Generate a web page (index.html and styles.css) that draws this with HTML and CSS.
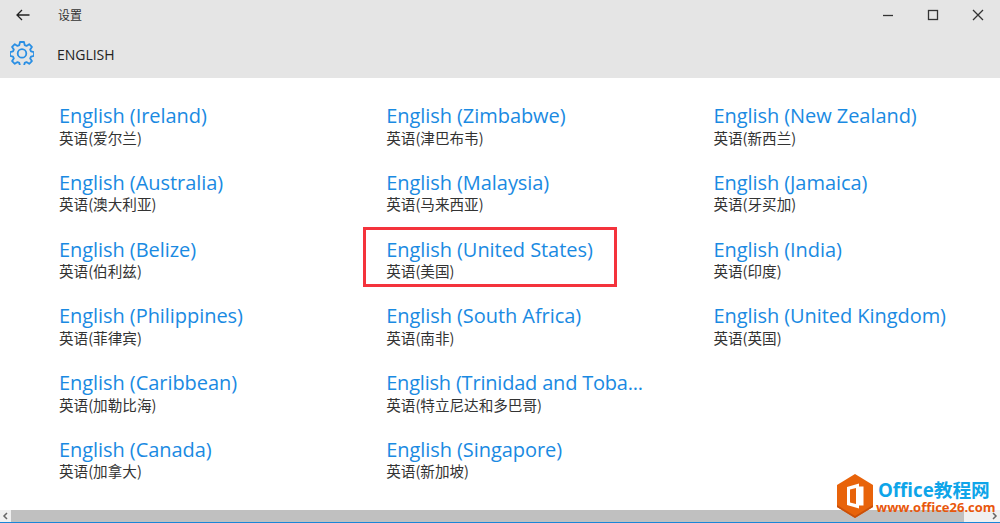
FILE: index.html
```html
<!DOCTYPE html>
<html lang="zh">
<head>
<meta charset="utf-8">
<title>设置</title>
<link rel="stylesheet" href="styles.css">
</head>
<body>
<header class="head">
  <div class="titlebar">
    <svg class="back" width="16" height="14" viewBox="0 0 16 14"><path d="M14.5 7H2M7 2 2 7l5 5" fill="none" stroke="#222" stroke-width="1.300"/></svg>
    <span class="apptitle">设置</span>
    <div class="winbtns">
      <svg width="12" height="12" viewBox="0 0 12 12"><path d="M1 6.500h10" stroke="#333" stroke-width="1.300"/></svg>
      <svg width="12" height="12" viewBox="0 0 12 12"><rect x="1.500" y="1.500" width="9" height="9" fill="none" stroke="#333" stroke-width="1.300"/></svg>
      <svg width="12" height="12" viewBox="0 0 12 12"><path d="M1 1l10 10M11 1 1 11" fill="none" stroke="#333" stroke-width="1.300"/></svg>
    </div>
  </div>
  <div class="pagebar">
    <svg class="gear" width="24" height="24" viewBox="0 0 24 24"><path d="M10 1h4l.7 3.100 1.800.8 2.700-1.700 2.700 2.700-1.700 2.700.8 1.800 3 .7v3.800l-3 .7-.8 1.800 1.700 2.700-2.700 2.700-2.700-1.700-1.800.8-.7 3h-4l-.7-3-1.800-.8-2.700 1.700-2.700-2.700 1.700-2.700-.8-1.800-3-.7v-3.800l3-.7.8-1.800-1.700-2.700 2.700-2.700 2.700 1.700 1.800-.8z" fill="none" stroke="#2a8fe4" stroke-width="1.800" stroke-linejoin="round"/><circle cx="12" cy="12.400" r="4.300" fill="none" stroke="#2a8fe4" stroke-width="1.800"/></svg>
    <span class="pagetitle">ENGLISH</span>
  </div>
</header>
<main class="langs">
  <div class="lang"><a>English (Ireland)</a><span>英语(爱尔兰)</span></div>
  <div class="lang"><a>English (Australia)</a><span>英语(澳大利亚)</span></div>
  <div class="lang"><a>English (Belize)</a><span>英语(伯利兹)</span></div>
  <div class="lang"><a>English (Philippines)</a><span>英语(菲律宾)</span></div>
  <div class="lang"><a>English (Caribbean)</a><span>英语(加勒比海)</span></div>
  <div class="lang"><a>English (Canada)</a><span>英语(加拿大)</span></div>
  <div class="lang"><a>English (Zimbabwe)</a><span>英语(津巴布韦)</span></div>
  <div class="lang"><a>English (Malaysia)</a><span>英语(马来西亚)</span></div>
  <div class="lang selected"><a>English (United States)</a><span>英语(美国)</span></div>
  <div class="lang"><a>English (South Africa)</a><span>英语(南非)</span></div>
  <div class="lang"><a class="tight">English (Trinidad and Toba...</a><span>英语(特立尼达和多巴哥)</span></div>
  <div class="lang"><a>English (Singapore)</a><span>英语(新加坡)</span></div>
  <div class="lang"><a>English (New Zealand)</a><span>英语(新西兰)</span></div>
  <div class="lang"><a>English (Jamaica)</a><span>英语(牙买加)</span></div>
  <div class="lang"><a>English (India)</a><span>英语(印度)</span></div>
  <div class="lang"><a>English (United Kingdom)</a><span>英语(英国)</span></div>
</main>
<div class="scrollbar">
  <svg class="arrow" width="11" height="12" viewBox="0 0 11 12"><path d="M7 3 4 6l3 3" fill="none" stroke="#666" stroke-width="1.500"/></svg>
  <div class="thumb"></div>
  <svg class="arrow right" width="11" height="12" viewBox="0 0 11 12"><path d="M4 3l3 3-3 3" fill="none" stroke="#666" stroke-width="1.500"/></svg>
</div>
<div class="accent"></div>
<div class="watermark">
  <svg class="wmlogo" width="36" height="44" viewBox="0 0 36 44"><path d="M18 0 36 11v22L18 44 0 33V11z" fill="#e8630a"/><path d="M0 33 18 44l18-11v-2L18 42 0 31z" fill="#c9500a"/><path d="M10 13 22 9.500v25L10 31zM13 15.500v13l6 1.500V14zM22 12.500h4.500v19H22" fill="#fff" fill-rule="evenodd"/></svg>
  <div class="wmtext">
    <span class="wm1">Office教程网</span>
    <span class="wm2">www.office26.com</span>
  </div>
</div>
</body>
</html>
```
FILE: styles.css
```css
html, body { margin: 0; padding: 0; }
body {
  width: 1000px;
  height: 523px;
  overflow: hidden;
  position: relative;
  background: #fff;
  font-family: "Open Sans", "Noto Sans CJK SC", sans-serif;
  display: flex;
  flex-direction: column;
}
.head { height: 78px; background: #e5e5e5; flex: none; }
.titlebar { height: 30px; display: flex; align-items: center; padding-left: 15px; }
.apptitle { margin-left: 27px; margin-bottom: 2px; font-size: 12px; color: #333; font-family: "Noto Sans CJK SC", sans-serif; }
.winbtns { margin-left: auto; display: flex; gap: 33px; padding-right: 16px; align-items: center; }
.pagebar { height: 48px; display: flex; align-items: center; padding-left: 10px; }
.gear { margin-bottom: 2px; }
.pagetitle { margin-left: 23px; font-size: 14px; color: #222; letter-spacing: -0.03px; }
.langs {
  flex: 1;
  display: grid;
  grid-auto-flow: column;
  grid-template-rows: repeat(6, 66.8px);
  grid-auto-columns: 327.2px;
  padding: 24px 0 0 59px;
  align-content: start;
}
.lang { display: flex; flex-direction: column; position: relative; }
.lang a { font-size: 20px; line-height: 27px; color: #1a8ae2; white-space: nowrap; letter-spacing: -0.06px; }
.lang a.tight { letter-spacing: -0.2px; }
.lang span { font-size: 14.6px; line-height: 16px; padding-top: 0.5px; color: #333; font-family: "Noto Sans CJK SC", sans-serif; }
.selected::after {
  content: "";
  position: absolute;
  left: -23px; top: -9px;
  width: 248px; height: 54px;
  border: 3px solid #f4333c;
}
.scrollbar { height: 12px; flex: none; display: flex; background: #f0f0f0; }
.arrow { flex: none; }
.arrow.right { margin-left: auto; }
.thumb { width: 953px; background: #c0c0c0; }
.accent { height: 1px; flex: none; background: #1a86d8; }
.watermark {
  position: absolute;
  left: 837px; top: 474px;
  display: flex;
  gap: 5px;
}
.wmtext { display: flex; flex-direction: column; padding-top: 5px; }
.wm1 { font-size: 18.7px; line-height: 21px; font-weight: 700; color: #0ea5e9; font-family: "Open Sans", "Noto Sans CJK SC", sans-serif; white-space: nowrap; }
.wm2 { font-size: 13px; line-height: 14px; margin-left: -2px; font-weight: 700; color: #e8570c; font-family: "Open Sans", sans-serif; white-space: nowrap; }
```
